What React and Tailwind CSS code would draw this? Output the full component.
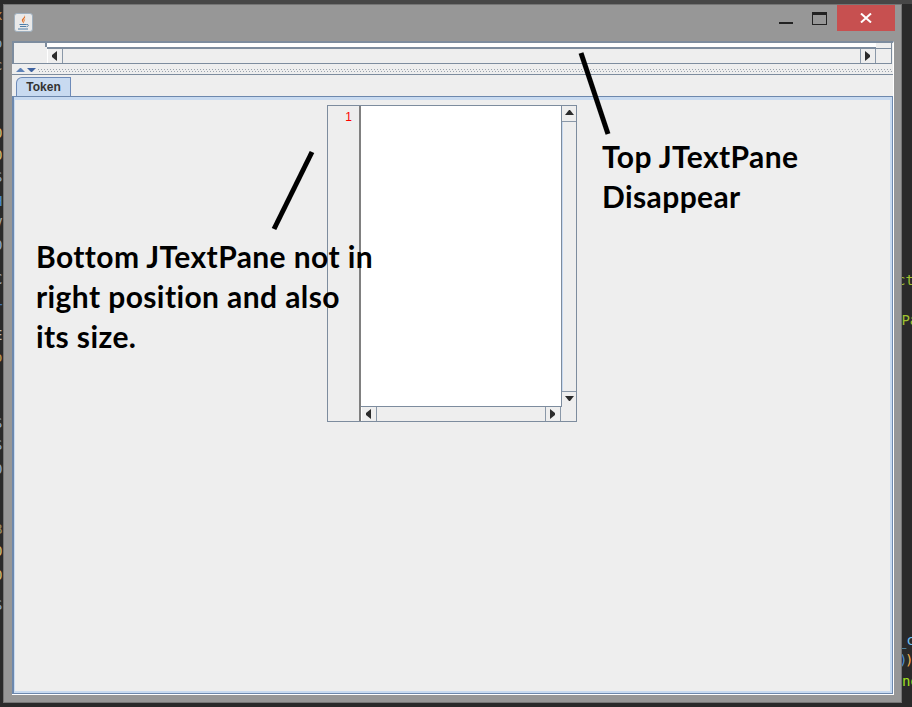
import React from 'react';

function Tri({ dir, className = '' }) {
  const points = {
    up: '0,6 4,1 5,1 9,6',
    down: '0,1 9,1 5,6 4,6',
    left: '6,0 6,10 1,6 1,4',
    right: '1,0 1,10 6,6 6,4',
  }[dir];
  return (
    <svg width="9" height="10" viewBox="0 0 9 10" className={className}>
      <polygon points={points} fill="#2b2b2b" />
    </svg>
  );
}

function ScrollBtn({ dir, className = '' }) {
  return (
    <div className={`flex items-center justify-center bg-[#eeeeee] ${className}`}>
      <Tri dir={dir} />
    </div>
  );
}

function JavaIcon() {
  return (
    <div className="w-[19px] h-[19px] rounded-[3px] bg-[#e9e9e9] border border-[#9fb0bf] flex items-center justify-center">
      <svg width="15" height="16" viewBox="0 0 15 16" fill="none">
        <path d="M8.500 0c1 2.500-3.500 3.500-2.500 6 .4 1 1.200 1.500 1.200 2.500 1.800-1.500-.8-2.500.6-4.300C9 3 9.800 2 8.500 0z" fill="#e0702a" />
        <path d="M9.500 3.500c-1.500 1-2 1.800-1 3.500.5-1 .2-2 1-3.500z" fill="#e8934f" />
        <path d="M3.500 9.500h7M4 11.500h6M2 14h10M10.500 9.500c2.500-.5 2.500 2 0 2.200" stroke="#4f7ea8" strokeWidth="1" />
      </svg>
    </div>
  );
}

function CodeBit({ className, children }) {
  return <span className={`absolute font-['DejaVu_Sans_Mono',monospace] text-[14px] leading-none ${className}`}>{children}</span>;
}

function Note({ className, children }) {
  return (
    <div className={`absolute font-['Lato',sans-serif] font-bold text-[30px] tracking-[0.4px] leading-[40px] text-black whitespace-nowrap ${className}`}>
      {children}
    </div>
  );
}

const leftBits = [
  { top: 'top-[8px]', color: 'text-[#c08a4c]', ch: 'x' },
  { top: 'top-[36px]', color: 'text-[#7f9fc0]', ch: 'o' },
  { top: 'top-[58px]', color: 'text-[#a8a090]', ch: 'c' },
  { top: 'top-[126px]', color: 'text-[#d0b870]', ch: 'O' },
  { top: 'top-[148px]', color: 'text-[#d0b870]', ch: 'O' },
  { top: 'top-[170px]', color: 'text-[#8aa4c8]', ch: 'S' },
  { top: 'top-[194px]', color: 'text-[#4f8fd0]', ch: 'H' },
  { top: 'top-[216px]', color: 'text-[#a8a8a8]', ch: 'V' },
  { top: 'top-[238px]', color: 'text-[#8aa4c8]', ch: 'O' },
  { top: 'top-[262px]', color: 'text-[#b8b8b8]', ch: '.' },
  { top: 'top-[272px]', color: 'text-[#a8b8c8]', ch: 'C' },
  { top: 'top-[302px]', color: 'text-[#3f6fb0]', ch: 'T' },
  { top: 'top-[328px]', color: 'text-[#b8b8b8]', ch: 'E' },
  { top: 'top-[350px]', color: 'text-[#c09a50]', ch: 'o' },
  { top: 'top-[376px]', color: 'text-[#b8b8b8]', ch: '.' },
  { top: 'top-[400px]', color: 'text-[#b8b8b8]', ch: '.' },
  { top: 'top-[416px]', color: 'text-[#8aa4c8]', ch: 'S' },
  { top: 'top-[438px]', color: 'text-[#8aa4c8]', ch: 'S' },
  { top: 'top-[462px]', color: 'text-[#8aa4c8]', ch: 'O' },
  { top: 'top-[522px]', color: 'text-[#9a8a60]', ch: 'B' },
  { top: 'top-[544px]', color: 'text-[#d0b870]', ch: 'O' },
  { top: 'top-[568px]', color: 'text-[#d0b870]', ch: 'O' },
  { top: 'top-[598px]', color: 'text-[#8aa4c8]', ch: 'S' },
];

export default function App() {
  return (
    <div className="relative w-[912px] h-[707px] overflow-hidden bg-[#2a2a2a] pt-[4px] pl-[3px]">
      {/* editor behind the window, only the edges show */}
      <div className="absolute left-[70px] right-0 top-0 h-[4px] bg-[#474747]" />
      <CodeBit className="left-[897px] top-[273px] text-[#9fc030]">ct</CodeBit>
      <CodeBit className="left-[893px] top-[313px] text-[#9fc030]">'Pa</CodeBit>
      <CodeBit className="left-[898px] top-[633px] text-[#6fc0f0]">_c</CodeBit>
      <CodeBit className="left-[899px] top-[653px] text-[#4f8fd0]">)</CodeBit>
      <CodeBit className="left-[905px] top-[653px] text-[#f0b050]">)</CodeBit>
      <CodeBit className="left-[902px] top-[674px] text-[#a0e020]">ne</CodeBit>
      {leftBits.map((bit, i) => (
        <CodeBit key={i} className={`left-[-6px] ${bit.top} ${bit.color}`}>{bit.ch}</CodeBit>
      ))}

      <div className="relative w-[899px] h-[699px] bg-[#979797] border border-[#757575] flex flex-col">
        {/* title bar */}
        <div className="h-[36px] shrink-0 flex items-start pl-[10px]">
          <div className="mt-[8px]">
            <JavaIcon />
          </div>
          <div className="ml-auto flex items-start pr-[6px]">
            <div className="w-[14px] h-[2px] bg-[#222222] mt-[17px]" />
            <div className="w-[15px] h-[13px] border border-[#222222] border-t-[3px] ml-[19px] mt-[7px]" />
            <div className="w-[58px] h-[26px] bg-[#c75050] ml-[10px] flex items-center justify-center">
              <svg width="12" height="10" viewBox="0 0 12 10">
                <path d="M1 0.500l10 9M11 0.500l-10 9" stroke="#ffffff" strokeWidth="2" />
              </svg>
            </div>
          </div>
        </div>

        {/* client area */}
        <div className="ml-[8px] mr-[7px] h-[654px] bg-[#eeeeee] border-t-2 border-t-[#7d8c9e] border-r border-r-white border-b border-b-white flex flex-col">
          {/* top pane, collapsed */}
          <div className="h-[21px] shrink-0 mr-[1px] border-l-2 border-[#7d8c9e] border-b border-r flex flex-col">
            <div className="h-[6px] shrink-0 flex">
              <div className="w-[31px]" />
              <div className="w-[2px] h-[4px] bg-[#7d8c9e]" />
              <div className="w-[829px] bg-white border-b-2 border-[#7d8c9e]" />
              <div className="flex-1 mt-[3px] border-b border-[#7d8c9e]" />
            </div>
            <div className="flex-1 flex">
              <div className="w-[33px]" />
              <ScrollBtn dir="left" className="w-[16px] border-l border-white border-r border-r-[#8a98a8]" />
              <div className="flex-1" />
              <ScrollBtn dir="right" className="w-[16px] border-l border-[#8a98a8] border-r border-r-[#8a98a8]" />
              <div className="w-[15px]" />
            </div>
          </div>

          {/* split divider */}
          <div className="h-[11px] shrink-0 border-b border-[#7d8c9e] flex items-start pt-[3px] pl-[4px]">
            <svg width="20" height="6" viewBox="0 0 20 6" className="shrink-0">
              <polygon points="0,5 4,1 5,1 9,5" fill="#5f83b9" />
              <polygon points="11,1 20,1 16,5 15,5" fill="#3f63a0" />
            </svg>
            <div className="flex-1 ml-[2px] mt-[2px] flex flex-col gap-[1px]">
              <div className="h-px bg-[repeating-linear-gradient(90deg,#9aa3ad_0_1px,transparent_1px_3px)]" />
              <div className="h-px ml-[1px] bg-[repeating-linear-gradient(90deg,#9aa3ad_0_1px,transparent_1px_3px)]" />
            </div>
          </div>

          {/* tabbed pane */}
          <div className="flex-1 flex flex-col pt-[2px]">
            <div className="h-[19px] shrink-0 flex pl-[4px]">
              <div className="w-[55px] bg-[#c8daf0] border-t border-l border-r border-[#6d8ab8] rounded-tl-[6px] flex items-center justify-center font-['Liberation_Sans',sans-serif] font-bold text-[12px] text-[#333333]">
                Token
              </div>
            </div>
            <div className="flex-1 border-t border-l-2 border-r border-b border-[#6d88ad]">
              <div className="h-full border-t-[3px] border-l border-r-2 border-b-2 border-[#c8daf0] pt-[5px]">
                <div className="ml-[312px] w-[250px] h-[317px] border border-[#7d8c9e] flex">
                  {/* line numbers */}
                  <div className="w-[33px] shrink-0 border-r-2 border-[#808080] pr-[7px] pt-[3px] text-right font-['Liberation_Sans',sans-serif] text-[12px] leading-[16px] text-[#ff0000]">
                    1
                  </div>
                  <div className="flex-1 flex flex-col">
                    <div className="flex-1 flex min-h-0">
                      <div className="flex-1 bg-white border-b border-[#7d8c9e]" />
                      <div className="w-[15px] shrink-0 border-l border-[#7d8c9e] flex flex-col pt-[1px]">
                        <ScrollBtn dir="up" className="h-[15px] border-b border-[#8a98a8]" />
                        <div className="flex-1 border-l border-[#c8daf0]" />
                        <ScrollBtn dir="down" className="h-[16px] border-t border-[#8a98a8]" />
                      </div>
                    </div>
                    <div className="h-[14px] shrink-0 flex">
                      <ScrollBtn dir="left" className="w-[16px] border-l border-white border-r border-r-[#8a98a8]" />
                      <div className="flex-1" />
                      <ScrollBtn dir="right" className="w-[16px] border-l border-[#8a98a8] border-r border-r-[#8a98a8]" />
                      <div className="w-[15px]" />
                    </div>
                  </div>
                </div>
              </div>
            </div>
          </div>
        </div>
      </div>

      {/* annotations drawn on top of the screenshot */}
      <svg width="912" height="707" className="absolute left-0 top-0 pointer-events-none">
        <line x1="581" y1="53" x2="608" y2="134" stroke="#000000" strokeWidth="5" />
        <line x1="312" y1="152" x2="274" y2="229" stroke="#000000" strokeWidth="5" />
      </svg>
      <Note className="left-[602px] top-[136px]">
        Top JTextPane
        <br />
        Disappear
      </Note>
      <Note className="left-[36px] top-[236px]">
        Bottom JTextPane not in
        <br />
        right position and also
        <br />
        its size.
      </Note>
    </div>
  );
}
